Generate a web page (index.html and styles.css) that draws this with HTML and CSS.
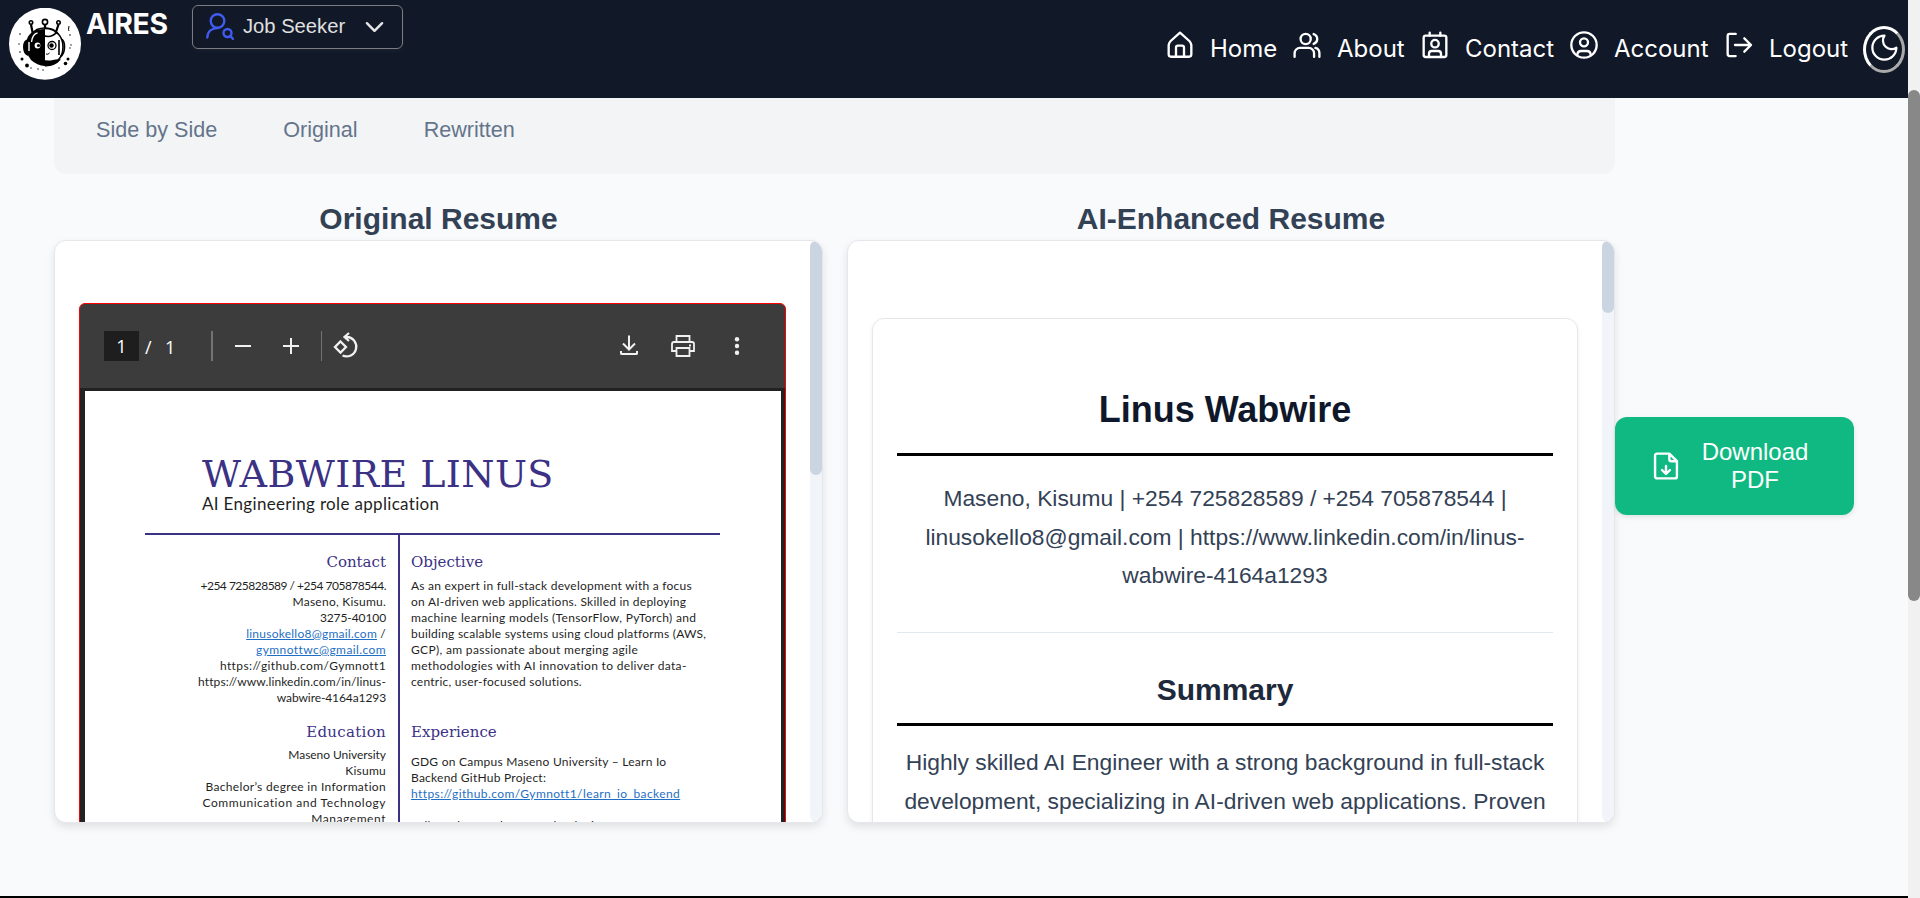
FILE: index.html
```html
<!DOCTYPE html>
<html lang="en">
<head>
<meta charset="utf-8">
<title>AIRES</title>
<link rel="stylesheet" href="styles.css">
</head>
<body>
<div class="window">
  <div class="page">
    <header class="header">
      <svg class="logo" viewBox="0 0 72 72">
        <circle cx="36" cy="35.700" r="36" fill="#fff"/>
        <g fill="none" stroke="#000" stroke-width="1.600">
          <circle cx="22" cy="14.500" r="1.700"/><circle cx="36" cy="14" r="2.600"/><circle cx="49.500" cy="14.500" r="1.700"/>
          <path d="M22 16.500l2 10M36 16.500v4M49.500 16.500l-3 9" stroke-width="2.200"/>
          <path d="M23.500 26q3-6 12.500-6 9 0 13 6"/>
          <path d="M36 20.500c11 0 18 8 18 18.500S47 57.500 36 57.500"/>
          <path d="M52 31q3.500 1 3.500 8t-4 9.500M50 32v15M33 27q9 4 15-3"/>
        </g>
        <path d="M36 21q-16 0-18.500 12Q16 45 22 52q6 5.500 14 6z"/>
        <path d="M19 31q-5 1-5 8t5 9z"/>
        <path d="M32 51q6 2.500 12 1 4-1 8-.500-6 7-16 7z"/>
        <path d="M22.500 34q1-8 6-9M20 34v9" stroke="#fff" stroke-width="1.400" fill="none"/>
        <circle cx="28.500" cy="37.500" r="2.900" fill="#fff"/><circle cx="29.500" cy="37.500" r="1.600"/>
        <circle cx="43" cy="37.500" r="4" fill="none" stroke="#000" stroke-width="1.300"/><circle cx="42.500" cy="37.500" r="2.200"/>
        <path d="M37 46q2 1 3.500-1" stroke="#000" fill="none"/>
        <g><circle cx="13" cy="51" r="1.500"/><circle cx="18" cy="57.500" r="1.900"/><circle cx="59" cy="51" r="1.500"/><circle cx="56.500" cy="55.500" r="1.800"/><circle cx="11" cy="26" r=".8"/><circle cx="10" cy="36" r=".7"/><circle cx="11" cy="44" r=".8"/><circle cx="62" cy="37" r=".7"/><circle cx="61" cy="27" r=".8"/><circle cx="61" cy="40" r=".7"/><circle cx="22" cy="60" r=".7"/><circle cx="29" cy="61" r=".7"/><circle cx="34" cy="62" r=".7"/><circle cx="50" cy="60" r=".7"/></g>
        <path d="M60 18q-1 4 0 5" stroke="#000" fill="none"/>
      </svg>
      <div class="brand">AIRES</div>
      <div class="role">
        <svg class="role-icon" viewBox="0 0 28 28" fill="none" stroke="#3f5bf0" stroke-width="2.400" stroke-linecap="round">
          <circle cx="11.500" cy="8" r="6.800"/><path d="M1.300 24.500C1.500 18 6 15 12 15"/><circle cx="21.500" cy="20" r="4"/><path d="M24.500 23l2.300 2.800"/>
        </svg>
        <span>Job Seeker</span>
        <svg class="chevron" viewBox="0 0 20 12" fill="none" stroke="#e5e5e5" stroke-width="2.600" stroke-linecap="round" stroke-linejoin="round"><path d="M2 2l8 8 8-8"/></svg>
      </div>
      <nav class="nav">
        <a class="nav-item"><svg class="nav-icon" viewBox="0 0 24 24"><path d="M5 9l7-6.200L19 9a5 5 0 0 1 1.500 3v7a1.800 1.800 0 0 1-1.800 1.800H5.300A1.800 1.800 0 0 1 3.500 19v-7A5 5 0 0 1 5 9z"/><path d="M9 20.500V14a1.500 1.500 0 0 1 1.500-1.500h3A1.500 1.500 0 0 1 15 14v6.500"/></svg>Home</a>
        <a class="nav-item"><svg class="nav-icon" viewBox="0 0 24 24"><circle cx="11" cy="7.500" r="3.800"/><path d="M2.700 20.800v-2.600a4 4 0 0 1 4-4h6.600a4 4 0 0 1 4 4v2.600M17 3.800a3.900 3.900 0 0 1 0 7.400M21.300 20.800V18a4 4 0 0 0-3-3.800"/></svg>About</a>
        <a class="nav-item"><svg class="nav-icon" viewBox="0 0 24 24"><rect x="3.500" y="5" width="17" height="16" rx="1.500"/><path d="M8 2.700V5M16 2.700V5M7.500 21v-2.500a2 2 0 0 1 2-2h5a2 2 0 0 1 2 2V21"/><circle cx="12" cy="11" r="2.800"/></svg>Contact</a>
        <a class="nav-item"><svg class="nav-icon" viewBox="0 0 24 24"><circle cx="12" cy="12" r="9.500"/><circle cx="12" cy="10" r="3"/><path d="M7 19.500c0-2 1-3 3-3h4c2 0 3 1 3 3"/></svg>Account</a>
        <a class="nav-item"><svg class="nav-icon" viewBox="0 0 24 24"><path d="M9.500 3.700H5a1.500 1.500 0 0 0-1.500 1.500v13.600a1.500 1.500 0 0 0 1.500 1.500h4.500M9 12h12M16 7l5 5-5 5"/></svg>Logout</a>
        <span class="theme"><svg viewBox="0 0 24 24"><path d="M12 2.800a6.700 6.700 0 0 0 9.200 9.400A9.300 9.300 0 1 1 12 2.800z"/></svg></span>
      </nav>
    </header>

    <main class="main">
      <div class="content">
        <div class="tabs"><span>Side by Side</span><span>Original</span><span>Rewritten</span></div>
        <div class="columns">
          <section class="column">
            <h2 class="column-title">Original Resume</h2>
            <div class="panel">
              <div class="panel-body">
                <div class="pdf">
                  <div class="toolbar">
                    <span class="page-now">1</span><span class="page-slash">/</span><span class="page-total">1</span>
                    <i class="divider wide"></i>
                    <svg class="tool minus" viewBox="0 0 24 24"><path d="M4 12h16" stroke="#f1f1f1" stroke-width="2"/></svg>
                    <svg class="tool plus" viewBox="0 0 24 24"><path d="M4 12h16M12 4v16" stroke="#f1f1f1" stroke-width="2"/></svg>
                    <i class="divider"></i>
                    <svg class="tool rotate" viewBox="0 0 28 28" fill="none" stroke="#f1f1f1" stroke-width="2.300"><path d="M8.500 9.500l5.500 5.500-5.500 5.500L3 15z"/><path d="M12 5h3a9.700 9.700 0 1 1-4.500 18.500M17 1l-4.500 4 4.500 4"/></svg>
                    <svg class="tool download" viewBox="0 0 24 24" fill="none" stroke="#f1f1f1" stroke-width="2"><path d="M12 1.500V15M6 9.500l6 6 6-6M4 17v2.500Q4 20 5 20h14q1 0 1-.5V17"/></svg>
                    <svg class="tool print" viewBox="0 0 24 24" fill="none" stroke="#f1f1f1" stroke-width="1.800"><path d="M5.500 8V2h13v6M5.500 17H1V10q0-2 2-2h18q2 0 2 2v7h-4.500M5.500 14h13v8h-13z"/><path d="M18 11.500h2"/></svg>
                    <svg class="tool dots" viewBox="0 0 24 24" fill="#f1f1f1"><circle cx="12" cy="5.300" r="2.200"/><circle cx="12" cy="12" r="2.200"/><circle cx="12" cy="18.700" r="2.200"/></svg>
                  </div>
                  <div class="sheet-wrap">
                    <div class="sheet">
                      <div class="cv-name">WABWIRE LINUS</div>
                      <div class="cv-role">AI Engineering role application</div>
                      <div class="cv-grid">
                        <div class="cv-left">
                          <h3>Contact</h3>
                          <p><span class="phones">+254 725828589 / +254 705878544.</span><br>Maseno, Kisumu.<br><span class="digits">3275-40100</span><br><u>linusokello8@gmail.com</u> /<br><u class="mail">gymnottwc@gmail.com</u><br><span class="mail">https://github.com/Gymnott1</span><br><span class="url">https://www.linkedin.com/in/linus-</span><br><span class="digits">wabwire-4164a1293</span></p>
                          <h3 class="edu">Education</h3>
                          <p><span class="school">Maseno University</span><br>Kisumu<br><span class="degree">Bachelor’s degree in Information</span><br><span class="degree wide">Communication and Technology</span><br><span class="degree wide">Management</span></p>
                        </div>
                        <div class="cv-right">
                          <h3>Objective</h3>
                          <p>As an expert in full-stack development with a focus<br>on AI-driven web applications. Skilled in deploying<br><span class="models">machine learning models (TensorFlow, PyTorch) and</span><br>building scalable systems using cloud platforms (AWS,<br><span class="models">GCP), am passionate about merging agile</span><br><span class="models">methodologies with AI innovation to deliver data-</span><br>centric, user-focused solutions.</p>
                          <h3 class="exp">Experience</h3>
                          <p>GDG on Campus Maseno University – Learn Io<br>Backend GitHub Project:<br><u class="repo">https://github.com/Gymnott1/learn_io_backend</u><br><br>Full Stack AI Web App Technologies: ReactJS,</p>
                        </div>
                      </div>
                    </div>
                  </div>
                </div>
              </div>
              <div class="track"><div class="thumb tall"></div></div>
            </div>
          </section>
          <section class="column second">
            <h2 class="column-title">AI-Enhanced Resume</h2>
            <div class="panel">
              <div class="panel-body enhanced">
                <article class="card">
                  <h1>Linus Wabwire</h1>
                  <p class="contact">Maseno, Kisumu | +254 725828589 / +254 705878544 |<br>linusokello8@gmail.com | https://www.linkedin.com/in/linus-<br>wabwire-4164a1293</p>
                  <h2>Summary</h2>
                  <p>Highly skilled AI Engineer with a strong background in full-stack<br>development, specializing in AI-driven web applications. Proven</p>
                </article>
              </div>
              <div class="track"><div class="thumb"></div></div>
            </div>
          </section>
        </div>
      </div>
      <button class="download-btn">
        <svg viewBox="0 0 24 24" fill="none" stroke="#fff" stroke-width="1.800" stroke-linejoin="round" stroke-linecap="round"><path d="M14.500 2.700H5.300A1.500 1.500 0 0 0 3.800 4.200v15.600a1.500 1.500 0 0 0 1.500 1.500h13.400a1.500 1.500 0 0 0 1.500-1.500V8.400zM14.500 2.700v4.200a1.500 1.500 0 0 0 1.500 1.500h4.200M12 12v5.500M9 15l3 3 3-3"/></svg>
        <span>Download<br>PDF</span>
      </button>
    </main>
    <div class="footer-line"></div>
  </div>
  <div class="page-track"><div class="page-thumb"></div></div>
</div>
</body>
</html>
```

FILE: styles.css
```css
* { box-sizing: border-box; }
body { margin: 0; overflow: hidden; font-family: "Liberation Sans", Arial, sans-serif; }
h1, h2, h3, p { margin: 0; }
svg { display: block; flex: none; }
.window { display: flex; width: 1920px; height: 898px; }
.page { display: flex; flex-direction: column; width: 1908px; background: #f9fafc; }
.page-track { width: 12px; background: #f1f1f1; padding-top: 90px; }
.page-thumb { height: 511px; border-radius: 6px; background: #888; }

.header { display: flex; height: 98px; flex: none; background: #111827; color: #fff; }
.logo { width: 72px; height: 72px; margin: 7.500px 0 0 9px; }
.brand { width: 106px; margin: 6px 0 0 5px; font: 700 28.400px/36px Inter, sans-serif; letter-spacing: -0.400px; }
.role { display: flex; align-items: center; width: 211px; height: 44px; margin-top: 5px; border: 1px solid #7b7d82; border-radius: 6px; padding-left: 13px; color: #e0e0e0; font-size: 20.200px; box-shadow: 0 2px 5px rgba(255,255,255,.04); }
.role span { width: 122px; margin-left: 9px; line-height: 40px; padding-bottom: 2px; }
.role-icon { width: 28px; height: 28px; }
.chevron { width: 19px; height: 12px; }
.nav { display: grid; grid-template-columns: 127px 128px 149px 155px 141px 43px; margin-left: 760px; font: 24px/36px Inter, sans-serif; }
.nav-item { display: flex; gap: 14px; height: 36px; margin: 31px 0 0 1px; white-space: nowrap; }
.nav-icon { width: 32px; height: 32px; margin-top: -2px; }
.nav svg { fill: none; stroke: #fff; stroke-width: 1.750; stroke-linecap: round; stroke-linejoin: round; }
.theme { display: flex; justify-content: center; align-items: center; width: 42px; height: 47px; margin-top: 26px; border: 3px solid; border-color: #fff #aaa #aaa #fff; border-radius: 50%; }
.theme svg { width: 31px; height: 31px; margin-top: -4px; }

.main { display: flex; height: 798px; flex: none; padding-left: 54px; }
.content { width: 1561px; }
.tabs { display: flex; height: 76px; padding-left: 42px; border-radius: 0 0 12px 12px; background: #f3f4f6; color: #64748b; font-size: 21.600px; line-height: 24px; padding-top: 20px; }
.tabs span { margin-right: 66px; }
.columns { display: flex; gap: 24px; padding-top: 27px; }
.column { width: 769px; }
.column.second { width: 768px; }
.column-title { height: 39px; color: #334155; font-size: 30px; line-height: 36px; text-align: center; }
.panel { display: flex; height: 583px; overflow: hidden; border: 1px solid #e5e7eb; border-radius: 12px; background: #fff; box-shadow: 0 4px 8px rgba(0,0,0,.1); }
.panel-body { flex: 1; height: 581px; overflow: hidden; padding: 62px 0 0 24px; }
.track { width: 12px; flex: none; border-radius: 6px; background: #f1f5f9; }
.thumb { height: 72px; border-radius: 6px; background: #cbd5e1; }
.thumb.tall { height: 234px; }

.pdf { width: 707px; height: 700px; overflow: hidden; border: 1px solid #f00; border-radius: 6px; background: #3c3c3c; }
.toolbar { display: flex; align-items: center; height: 84px; padding-left: 24px; color: #fff; font: 18px/30px "Open Sans", sans-serif; }
.page-now { width: 35px; height: 30px; background: #1e1e1e; text-align: center; }
.page-slash { width: 20px; margin-left: 6px; padding-top: 1px; }
.page-total { width: 21px; padding-top: 1px; }
.divider { width: 1px; height: 30px; background: #737373; }
.divider.wide { width: 2px; margin: 0 20px 0 25px; }
.tool { width: 24px; height: 24px; }
.minus { margin-left: -2px; }
.plus { margin: 0 18px 0 24px; }
.rotate { width: 28px; height: 28px; margin-left: 10px; }
.download { margin-left: 257px; margin-top: -1px; }
.print { margin-left: 30px; }
.dots { margin-left: 30px; }
.sheet-wrap { height: 620px; padding: 3px 4px 0 5px; background: #222; }
.sheet { height: 617px; background: #fff; color: #1f1f1f; padding: 61px 61px 0 60px; }
.cv-name { margin-left: 57px; color: #3b3185; font: 38px/44px "DejaVu Serif", serif; letter-spacing: .4px; white-space: nowrap; }
.cv-role { height: 37px; margin: -3px 0 3px 57px; font: 17px/22px Lato, sans-serif; letter-spacing: .330px; }
.cv-grid { display: grid; grid-template-columns: 255px 320px; border-top: 2px solid #3b3185; height: 400px; font: 12px/16px Lato, sans-serif; letter-spacing: .240px; white-space: nowrap; }
.cv-left { padding: 17px 12px 0 0; border-right: 2px solid #3b3185; text-align: right; }
.cv-right { padding: 17px 0 0 11px; }
.cv-grid h3 { height: 25.500px; color: #3b3185; font: 15px/20px "DejaVu Serif", serif; letter-spacing: 0; }
.cv-grid .edu { height: 25px; margin-top: 16px; letter-spacing: .3px; }
.cv-grid .exp { height: 32px; margin-top: 32px; }
.cv-grid u { color: #1f6fc4; }
.phones { letter-spacing: -.500px; }
.digits { letter-spacing: -.100px; }
.url { letter-spacing: .110px; }
.cv-grid .mail { letter-spacing: .4px; }
.school { letter-spacing: -.050px; }
.degree { letter-spacing: .320px; }
.degree.wide { letter-spacing: .550px; }
.models { letter-spacing: .330px; }
.cv-grid .repo { letter-spacing: .400px; }

.panel-body.enhanced { padding: 77px 0 0 24px; }
.card { width: 706px; height: 560px; padding: 71px 24px 0; border: 1px solid #e5e7eb; border-radius: 12px; box-shadow: 0 2px 5px rgba(0,0,0,.07); color: #334155; font-size: 22.800px; line-height: 38.600px; text-align: center; white-space: nowrap; }
.card h1 { height: 66px; border-bottom: 3px solid #000; color: #0f172a; font-size: 36px; line-height: 40px; }
.card .contact { height: 177px; padding-top: 23px; border-bottom: 1px solid #e2e8f0; }
.card h2 { height: 93px; margin-bottom: 17px; padding-top: 39px; border-bottom: 3px solid #000; color: #1e293b; font-size: 30px; line-height: 36px; }

.download-btn { display: flex; align-items: center; width: 239px; height: 98px; margin-top: 319px; padding: 0 0 0 35px; border: 0; border-radius: 12px; background: #10b981; box-shadow: 0 2px 5px rgba(0,0,0,.1); color: #fff; font: 24px/28px "Liberation Sans", Arial, sans-serif; }
.download-btn svg { width: 32px; height: 32px; }
.download-btn span { width: 146px; text-align: center; }
.footer-line { height: 2px; background: #000; }
```
